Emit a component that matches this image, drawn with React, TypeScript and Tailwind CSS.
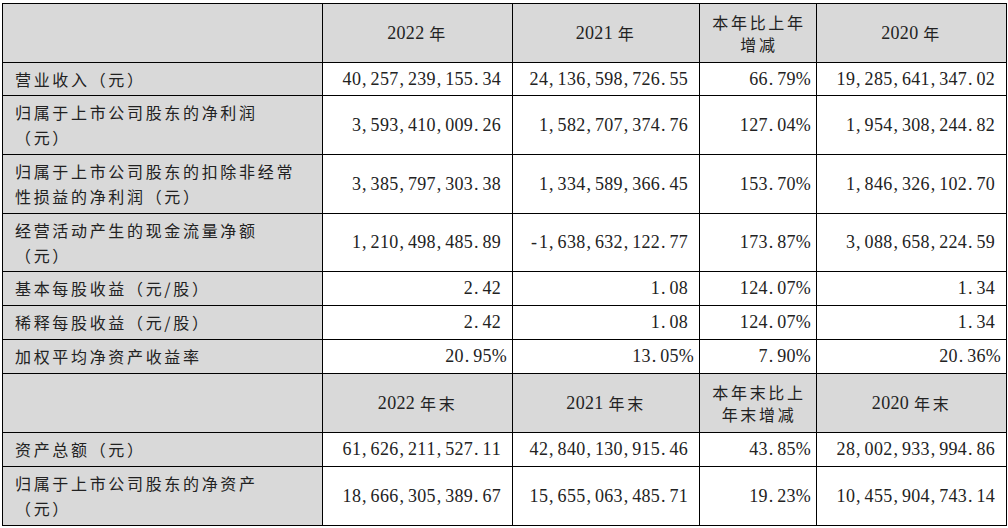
import React from "react";

const cjk = "font-['Noto_Sans_CJK_SC',sans-serif] text-[16px] tracking-[2.67px]";

// every glyph sits in a half-em cell, like the PDF's fixed-width font
const Num = ({ v }: { v: string }) => (
  <span className="inline-flex font-['Liberation_Serif',serif] text-[18px]">
    {v.split("").map((c, i) => (
      <span
        key={i}
        className={
          c === "," || c === "."
            ? "inline-block w-[9.33px] text-left pl-[1px]"
            : "inline-block w-[9.33px] text-center"
        }
      >
        {c}
      </span>
    ))}
  </span>
);

const Year = ({ y, suffix }: { y: string; suffix: string }) => (
  <span className="inline-flex items-center">
    <Num v={y} />
    <span className="inline-block w-[5px]" />
    <span className={cjk}>{suffix}</span>
  </span>
);

type Row = { label: string[]; h: string; vals: string[] };

const top: Row[] = [
  { label: ["营业收入（元）"], h: "h-[33px]", vals: ["40,257,239,155.34", "24,136,598,726.55", "66.79%", "19,285,641,347.02"] },
  { label: ["归属于上市公司股东的净利润", "（元）"], h: "h-[59px]", vals: ["3,593,410,009.26", "1,582,707,374.76", "127.04%", "1,954,308,244.82"] },
  { label: ["归属于上市公司股东的扣除非经常", "性损益的净利润（元）"], h: "h-[59px]", vals: ["3,385,797,303.38", "1,334,589,366.45", "153.70%", "1,846,326,102.70"] },
  { label: ["经营活动产生的现金流量净额", "（元）"], h: "h-[58px]", vals: ["1,210,498,485.89", "-1,638,632,122.77", "173.87%", "3,088,658,224.59"] },
  { label: ["基本每股收益（元/股）"], h: "h-[34px]", vals: ["2.42", "1.08", "124.07%", "1.34"] },
  { label: ["稀释每股收益（元/股）"], h: "h-[34px]", vals: ["2.42", "1.08", "124.07%", "1.34"] },
  { label: ["加权平均净资产收益率"], h: "h-[34px]", vals: ["20.95%", "13.05%", "7.90%", "20.36%"] },
];

const bottom: Row[] = [
  { label: ["资产总额（元）"], h: "h-[34px]", vals: ["61,626,211,527.11", "42,840,130,915.46", "43.85%", "28,002,933,994.86"] },
  { label: ["归属于上市公司股东的净资产", "（元）"], h: "h-[59px]", vals: ["18,666,305,389.67", "15,655,063,485.71", "19.23%", "10,455,904,743.14"] },
];

const td = "border border-black p-0";

const BodyRow = ({ r }: { r: Row }) => (
  <tr>
    <td className={`${td} ${r.h} bg-[#d9d9d9] pl-[12px] align-middle`}>
      <div className={`${cjk} leading-[25px]`}>
        {r.label.map((l, i) => (
          <div key={i}>{l}</div>
        ))}
      </div>
    </td>
    {r.vals.map((v, i) => (
      <td key={i} className={`${td} ${r.h} text-right pr-[11px] align-middle`}>
        <Num v={v} />
      </td>
    ))}
  </tr>
);

const HeadRow = ({ suffix, change }: { suffix: string; change: string[] }) => (
  <tr className="bg-[#d9d9d9]">
    <td className={`${td} h-[59px]`} />
    <td className={`${td} h-[59px] text-center`}>
      <Year y="2022" suffix={suffix} />
    </td>
    <td className={`${td} h-[59px] text-center`}>
      <Year y="2021" suffix={suffix} />
    </td>
    <td className={`${td} h-[59px] text-center`}>
      <div className={`${cjk} leading-[22px] pl-[2px]`}>
        {change.map((l, i) => (
          <div key={i}>{l}</div>
        ))}
      </div>
    </td>
    <td className={`${td} h-[59px] text-center`}>
      <Year y="2020" suffix={suffix} />
    </td>
  </tr>
);

export default function App() {
  return (
    <div className="w-[1008px] h-[528px] bg-white pt-[3px] pl-[2px] text-[#222]">
      <table className="table-fixed border-collapse w-[1004px]">
        <colgroup>
          <col className="w-[320px]" />
          <col className="w-[190px]" />
          <col className="w-[187px]" />
          <col className="w-[117px]" />
          <col className="w-[190px]" />
        </colgroup>
        <tbody>
          <HeadRow suffix="年" change={["本年比上年", "增减"]} />
          {top.map((r, i) => (
            <BodyRow key={i} r={r} />
          ))}
          <HeadRow suffix="年末" change={["本年末比上", "年末增减"]} />
          {bottom.map((r, i) => (
            <BodyRow key={i} r={r} />
          ))}
        </tbody>
      </table>
    </div>
  );
}
